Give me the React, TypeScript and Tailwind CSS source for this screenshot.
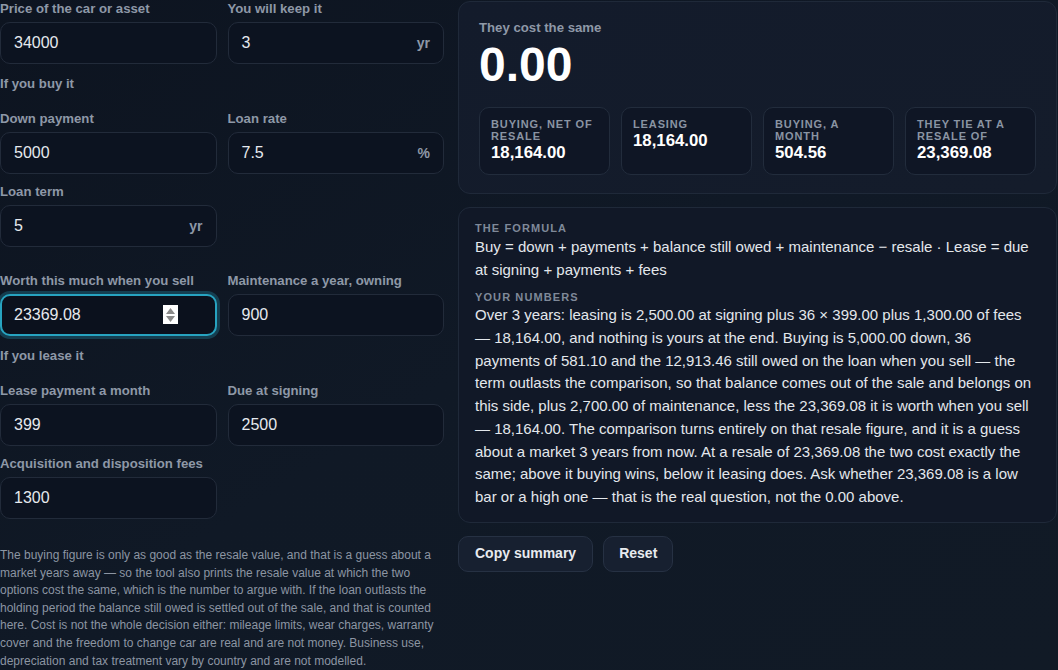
import React from "react"

const font = "font-['Liberation_Sans',Arial,sans-serif]"

function Label({ text }: { text: string }) {
  return (
    <div className="text-[13.2px] leading-4 font-bold text-[#8e98a7] whitespace-nowrap">
      {text}
    </div>
  )
}

function Field({
  label,
  value,
  unit,
  focused
}: {
  label: string
  value: string
  unit?: string
  focused?: boolean
}) {
  return (
    <div className="flex flex-col gap-[5px]">
      <Label text={label} />
      <div
        className={
          focused
            ? "relative h-[42px] rounded-[10px] border-2 border-[#27a3c0] bg-[#0b111d] shadow-[0_0_0_3px_rgba(28,110,135,0.45)] flex items-center pl-[12px] pr-[38px]"
            : "relative h-[42px] rounded-[10px] border border-[#222b3a] bg-[#0c1320] flex items-center pl-[13px] pr-[13px]"
        }
      >
        <span className="flex-1 text-[16px] text-[#e6e9ee]">{value}</span>
        {unit && (
          <span className="text-[14px] font-bold text-[#8e98a7]">{unit}</span>
        )}
        {focused && (
          <span className="absolute right-[37px] top-[9px] w-[15px] h-[19px] bg-white flex flex-col items-center justify-center gap-[2px]">
            <svg width="9" height="6" viewBox="0 0 9 6">
              <path d="M4.5 0 L9 6 L0 6 Z" fill="#8a8a8a" />
            </svg>
            <svg width="9" height="6" viewBox="0 0 9 6">
              <path d="M0 0 L9 0 L4.5 6 Z" fill="#8a8a8a" />
            </svg>
          </span>
        )}
      </div>
    </div>
  )
}

function Stat({ label, value }: { label: string; value: string }) {
  return (
    <div className="rounded-[10px] border border-[#222c3c] bg-[#0f1625] px-[11px] pt-[10px] pb-[11px]">
      <div className="text-[11px] leading-[12px] font-bold uppercase tracking-[0.08em] text-[#8a94a3]">
        {label}
      </div>
      <div className="mt-px text-[16.8px] leading-5 font-bold text-white">
        {value}
      </div>
    </div>
  )
}

export default function App() {
  return (
    <div
      className={`${font} min-h-screen w-[1058px] h-[670px] overflow-hidden bg-gradient-to-br from-[#0d1420] via-[#101926] to-[#111a26] grid grid-cols-[444px_1fr] gap-[14px] pr-px`}
    >
      {/* INPUTS */}

      <div className="flex flex-col pt-px">
        <div className="grid grid-cols-2 gap-x-[11px]">
          <Field label="Price of the car or asset" value="34000" />
          <Field label="You will keep it" value="3" unit="yr" />
        </div>

        <div className="mt-[12px]">
          <Label text="If you buy it" />
        </div>

        <div className="mt-[19px] grid grid-cols-2 gap-x-[11px] gap-y-[10px]">
          <Field label="Down payment" value="5000" />
          <Field label="Loan rate" value="7.5" unit="%" />
          <Field label="Loan term" value="5" unit="yr" />
        </div>

        <div className="mt-[26px] grid grid-cols-2 gap-x-[11px]">
          <Field label="Worth this much when you sell" value="23369.08" focused />
          <Field label="Maintenance a year, owning" value="900" />
        </div>

        <div className="mt-[12px]">
          <Label text="If you lease it" />
        </div>

        <div className="mt-[19px] grid grid-cols-2 gap-x-[11px] gap-y-[10px]">
          <Field label="Lease payment a month" value="399" />
          <Field label="Due at signing" value="2500" />
          <Field label="Acquisition and disposition fees" value="1300" />
        </div>

        <p className="mt-[28px] text-[12px] leading-[17.6px] text-[#8c95a3]">
          The buying figure is only as good as the resale value, and that is a
          guess about a market years away — so the tool also prints the resale
          value at which the two options cost the same, which is the number to
          argue with. If the loan outlasts the holding period the balance still
          owed is settled out of the sale, and that is counted here. Cost is not
          the whole decision either: mileage limits, wear charges, warranty
          cover and the freedom to change car are real and are not money.
          Business use, depreciation and tax treatment vary by country and are
          not modelled.
        </p>
      </div>

      {/* RESULTS */}

      <div className="flex flex-col pt-px">
        <div className="rounded-[12px] border border-[#1f2939] bg-gradient-to-br from-[#131b2b] to-[#141c2b] px-5 pt-[18px] pb-[18px]">
          <div className="text-[13.2px] leading-4 font-bold text-[#8e98a7]">
            They cost the same
          </div>
          <div className="mt-[5px] text-[48px] leading-none font-bold text-white">
            0.00
          </div>
          <div className="mt-[18px] grid grid-cols-4 gap-[11px]">
            <Stat label="Buying, net of resale" value="18,164.00" />
            <Stat label="Leasing" value="18,164.00" />
            <Stat label="Buying, a month" value="504.56" />
            <Stat label="They tie at a resale of" value="23,369.08" />
          </div>
        </div>

        <div className="mt-[13px] rounded-[12px] border border-[#1f2939] bg-[#111827] px-4 pt-[13px] pb-[13px]">
          <div className="text-[11px] leading-[14px] font-bold uppercase tracking-[0.1em] text-[#7f8999]">
            The formula
          </div>
          <p className="text-[15px] leading-[23px] text-[#e3e7ec]">
            Buy = down + payments + balance still owed + maintenance − resale ·
            Lease = due at signing + payments + fees
          </p>
          <div className="mt-[9px] text-[11px] leading-[14px] font-bold uppercase tracking-[0.1em] text-[#7f8999]">
            Your numbers
          </div>
          <p className="text-[15px] leading-[22.75px] text-[#e3e7ec]">
            Over 3 years: leasing is 2,500.00 at signing plus 36 × 399.00 plus
            1,300.00 of fees — 18,164.00, and nothing is yours at the end.
            Buying is 5,000.00 down, 36 payments of 581.10 and the 12,913.46
            still owed on the loan when you sell — the term outlasts the
            comparison, so that balance comes out of the sale and belongs on
            this side, plus 2,700.00 of maintenance, less the 23,369.08 it is
            worth when you sell — 18,164.00. The comparison turns entirely on
            that resale figure, and it is a guess about a market 3 years from
            now. At a resale of 23,369.08 the two cost exactly the same; above
            it buying wins, below it leasing does. Ask whether 23,369.08 is a
            low bar or a high one — that is the real question, not the 0.00
            above.
          </p>
        </div>

        <div className="mt-[13px] flex gap-[10px]">
          <button className="h-[36px] rounded-[10px] border border-[#263143] bg-[#172030] px-4 text-[14px] font-bold text-[#e8ebef]">
            Copy summary
          </button>
          <button className="h-[36px] rounded-[10px] border border-[#263143] bg-[#172030] px-[15px] text-[14px] font-bold text-[#e8ebef]">
            Reset
          </button>
        </div>
      </div>
    </div>
  )
}
